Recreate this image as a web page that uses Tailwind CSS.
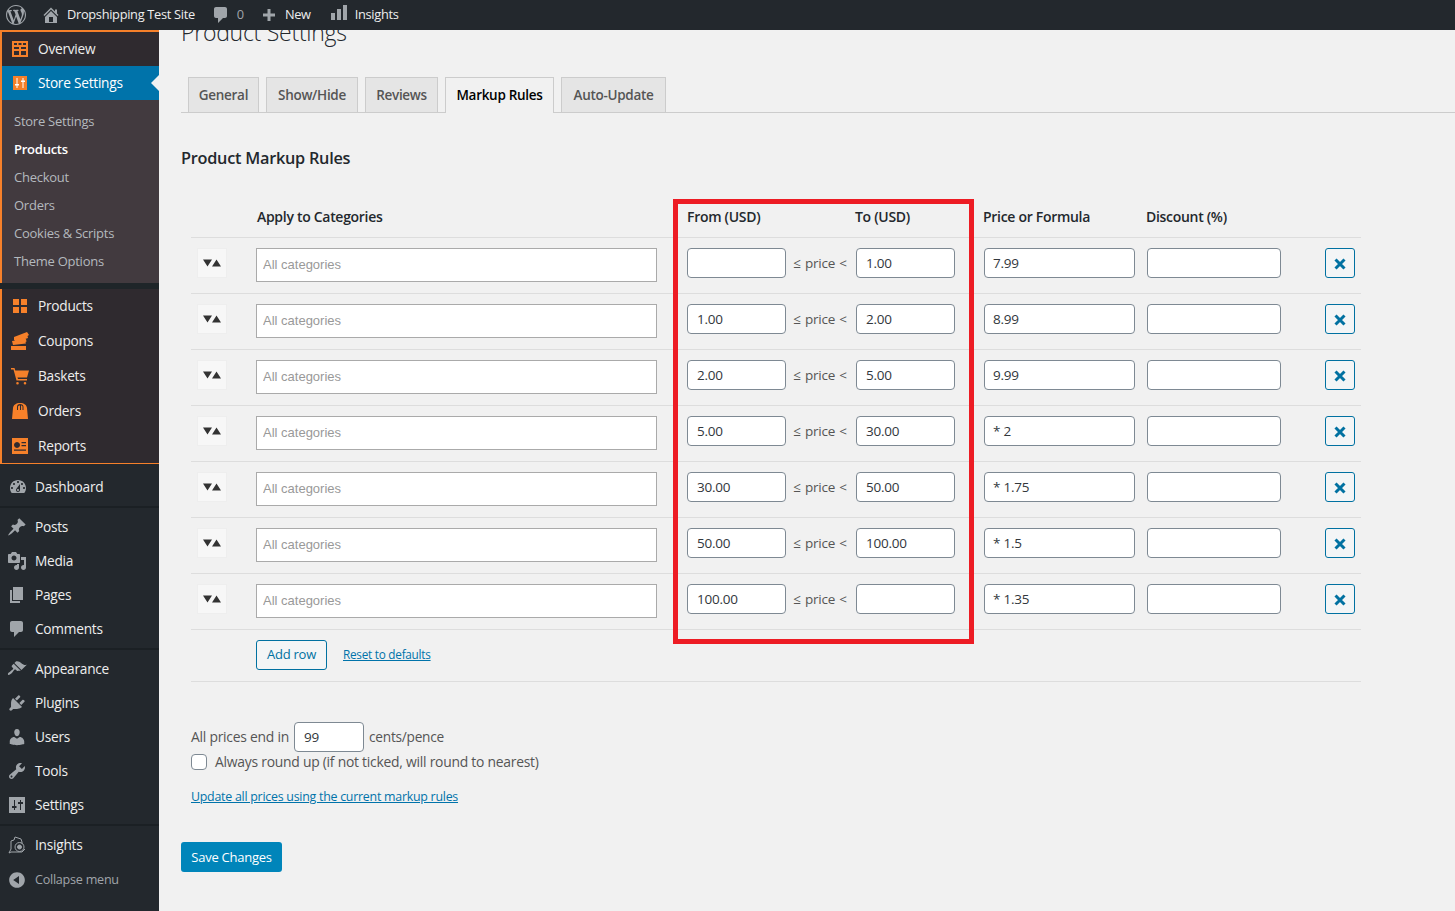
<!DOCTYPE html>
<html lang="en">
<head>
  <meta charset="UTF-8">
  <title>Product Settings</title>
  <script src="https://cdn.jsdelivr.net/npm/@tailwindcss/browser@4"></script>
</head>
<body class="bg-[#f1f1f1] text-[#444] font-['Open_Sans',sans-serif] text-[13px] tracking-[-0.25px]">
  <!-- Admin bar -->
  <header class="relative z-10 flex items-center h-[30px] bg-[#23282d] text-[#eee] text-[12.8px] tracking-[-0.3px]">
    <svg class="w-5 h-5 ml-[6px] fill-[#a0a5aa]" viewBox="0 0 20 20"><path d="M20 10c0-5.51-4.49-10-10-10C4.48 0 0 4.49 0 10c0 5.52 4.48 10 10 10 5.51 0 10-4.48 10-10zM7.78 15.37L4.37 6.22c.55-.02 1.17-.08 1.17-.08.5-.06.44-1.13-.06-1.11 0 0-1.45.11-2.37.11-.18 0-.37 0-.58-.01C4.12 2.69 6.87 1.11 10 1.11c2.33 0 4.45.87 6.05 2.34-.68-.11-1.65.39-1.65 1.58 0 .74.45 1.36.9 2.1.35.61.55 1.36.55 2.46 0 1.49-1.4 5-1.4 5l-3.03-8.37c.54-.02.82-.17.82-.17.5-.05.44-1.25-.06-1.22 0 0-1.44.12-2.38.12-.87 0-2.33-.12-2.33-.12-.5-.03-.56 1.2-.06 1.22l.92.08 1.26 3.41zM17.41 10c.24-.64.74-1.87.43-4.25.7 1.29 1.05 2.71 1.05 4.25 0 3.29-1.73 6.24-4.4 7.78.97-2.59 1.94-5.2 2.92-7.78zM6.1 18.09C3.12 16.65 1.11 13.53 1.11 10c0-1.3.23-2.48.72-3.59C3.25 10.3 4.67 14.2 6.1 18.09zm4.03-6.63l2.58 6.98c-.86.29-1.76.45-2.71.45-.79 0-1.57-.11-2.29-.33.81-2.38 1.62-4.74 2.42-7.1z"/></svg>
    <svg class="w-5 h-5 ml-[15px] fill-[#a0a5aa]" viewBox="0 0 20 20"><path d="M16 8.5l1.53 1.53-1.06 1.06L10 4.62l-6.47 6.47-1.06-1.06L10 2.5l4 4v-2h2v4zm-6-2.46l6 5.99V18H4v-5.97zM12 17v-5H8v5h4z"/></svg>
    <span class="ml-[6px]">Dropshipping Test Site</span>
    <svg class="w-5 h-5 ml-[16px] fill-[#a0a5aa]" viewBox="0 0 20 20"><path d="M5 2h9c1.1 0 2 .9 2 2v7c0 1.1-.9 2-2 2h-2l-5 5v-5H5c-1.1 0-2-.9-2-2V4c0-1.1.9-2 2-2z"/></svg>
    <span class="ml-[6px] text-[#a0a5aa]">0</span>
    <svg class="w-5 h-5 ml-[15px] fill-[#a0a5aa]" viewBox="0 0 20 20"><path d="M16 8.5v3h-4.5V16h-3v-4.500H4v-3h4.500V4h3v4.500z"/></svg>
    <span class="ml-[6px]">New</span>
    <svg class="w-5 h-5 ml-[18px] -mt-[4px] fill-[#a0a5aa]" viewBox="0 0 20 20"><path d="M18 17V2h-4v15h4zm-6 0V6H8v11h4zm-6 0v-7H2v7h4z"/></svg>
    <span class="ml-[6px]">Insights</span>
  </header>

  <div class="flex min-h-[881px]">
    <!-- Sidebar -->
    <aside class="w-[159px] shrink-0 bg-[#23282d] text-[#eee] text-[13.7px]">
      <div class="border-l-2 border-t-2 border-b border-[#f6802a] bg-[#2f2a2f]">
        <a class="flex items-center h-[34px] pl-[9px] gap-[9px]">
          <svg class="w-[18px] h-[18px] fill-[#f6802a]" viewBox="0 0 18 18"><path d="M1 1h16v16H1zM3 3v2h3V3zm4.500 0v2h3V3zM12 3v2h3V3zM3 7v2h5V7zm7 0v2h5V7zM3 11v4h5v-4zm7 0v4h5v-4z" fill-rule="evenodd"/></svg>
          <span>Overview</span>
        </a>
        <a class="relative flex items-center h-[34px] pl-[9px] gap-[9px] bg-[#0073aa] text-white -ml-[2px] border-l-2 border-[#f6802a]">
          <svg class="w-[18px] h-[18px]" viewBox="0 0 18 18"><path class="fill-[#f6802a]" d="M2 2h14v14H2z"/><path class="fill-white" d="M5.500 4h1v6H8v1.500H6.500V14h-1v-2.500H4V10h1.500zM11.500 4h1v2.500H14V8h-1.500v6h-1V8H10V6.500h1.500z"/></svg>
          <span>Store Settings</span>
          <span class="absolute right-0 top-[9px] border-y-[8px] border-r-[8px] border-y-transparent border-r-[#f1f1f1]"></span>
        </a>
        <ul class="bg-[#423a3f] pt-[8px] pb-[7px] text-[13px] text-[#b4b9be]">
          <li class="flex items-center h-[28px] pl-[12px]">Store Settings</li>
          <li class="flex items-center h-[28px] pl-[12px] font-semibold text-white">Products</li>
          <li class="flex items-center h-[28px] pl-[12px]">Checkout</li>
          <li class="flex items-center h-[28px] pl-[12px]">Orders</li>
          <li class="flex items-center h-[28px] pl-[12px]">Cookies &amp; Scripts</li>
          <li class="flex items-center h-[28px] pl-[12px]">Theme Options</li>
        </ul>
        <div class="h-[6px] bg-[#1f2529] -ml-[2px]"></div>
        <a class="flex items-center h-[35px] pb-[1px] pl-[9px] gap-[9px]">
          <svg class="w-[18px] h-[18px] fill-[#f6802a]" viewBox="0 0 18 18"><path d="M2 2h6v6H2zM10 2h6v6h-6zM2 10h6v6H2zM10 10h6v6h-6z"/></svg>
          <span>Products</span>
        </a>
        <a class="flex items-center h-[35px] pb-[1px] pl-[8px] gap-[8px]">
          <svg class="w-[20px] h-[20px] fill-[#f6802a]" viewBox="0 0 20 20"><path d="M4 6l13-5 2 3-1.500 1 .5 2L7 11 4 9zM2 10l14-2 .5 2.500-1 .5.5 1.500L3 14zM1 15h15v4H1z"/></svg>
          <span>Coupons</span>
        </a>
        <a class="flex items-center h-[35px] pb-[1px] pl-[9px] gap-[9px]">
          <svg class="w-[18px] h-[18px] fill-[#f6802a]" viewBox="0 0 18 18"><path d="M0 1h3.500l.8 2.500H18l-2 7H6.500l.5 1.500h9v1.500H5.500L2.500 2.500H0zM6.500 15a1.300 1.300 0 1 1 0 2.600 1.300 1.300 0 0 1 0-2.600zM14 15a1.300 1.300 0 1 1 0 2.600 1.300 1.300 0 0 1 0-2.600z"/></svg>
          <span>Baskets</span>
        </a>
        <a class="flex items-center h-[35px] pb-[1px] pl-[9px] gap-[9px]">
          <svg class="w-[18px] h-[18px] fill-[#f6802a]" viewBox="0 0 18 18" fill-rule="evenodd"><path d="M1 17l1-11c.3-3 3-5 7-5s6.700 2 7 5l1 11zM6 5v3h1V5c0-1 .8-1.500 2-1.500v4.500h1V3.500c1 0 1.500.5 1.500 1.500v3h1V5c0-2-1.500-3-3.500-3S6 3 6 5z"/></svg>
          <span>Orders</span>
        </a>
        <a class="flex items-center h-[34px] pl-[9px] gap-[9px]">
          <svg class="w-[18px] h-[18px] fill-[#f6802a]" viewBox="0 0 18 18" fill-rule="evenodd"><path d="M1 1h16v16H1zM6 5a3 3 0 1 0 .01 0zM10.500 5v1.200H15V5zm0 3v1.200H15V8zM3 12.500v1.200h12v-1.200z"/></svg>
          <span>Reports</span>
        </a>
      </div>

      <div class="pt-[6px]">
        <a class="flex items-center h-[34px] pl-[8px] gap-[7px]">
          <svg class="w-5 h-5 fill-[#a0a5aa]" viewBox="0 0 20 20"><path d="M3.760 16h12.480c1.100-1.370 1.760-3.110 1.760-5 0-4.420-3.580-8-8-8s-8 3.580-8 8c0 1.890.66 3.630 1.760 5zM10 4c.55 0 1 .45 1 1s-.45 1-1 1-1-.45-1-1 .45-1 1-1zM6 6c.55 0 1 .45 1 1s-.45 1-1 1-1-.45-1-1 .45-1 1-1zm8 0c.55 0 1 .45 1 1s-.45 1-1 1-1-.45-1-1 .45-1 1-1zm-5.370 5.550L12 7v6c0 1.100-.9 2-2 2s-2-.9-2-2c0-.57.24-1.080.63-1.450zM4 10c.55 0 1 .45 1 1s-.45 1-1 1-1-.45-1-1 .45-1 1-1zm12 0c.55 0 1 .45 1 1s-.45 1-1 1-1-.45-1-1 .45-1 1-1zm-5 3c0-.55-.45-1-1-1s-1 .45-1 1 .45 1 1 1 1-.45 1-1z" fill-rule="evenodd"/></svg>
          <span>Dashboard</span>
        </a>
      </div>
      <div class="h-[2px] bg-[#1b2024] mt-[2px] mb-[2px]"></div>
      <nav>
        <a class="flex items-center h-[34px] pl-[7px] gap-[8px]">
          <svg class="w-5 h-5 fill-[#a0a5aa]" viewBox="0 0 20 20"><path d="M10.440 3.020l1.820-1.820 6.360 6.350-1.830 1.820c-1.050-.68-2.480-.57-3.410.36l-.75.75c-.92.93-1.040 2.350-.35 3.410l-1.830 1.820-2.410-2.410-2.800 2.790c-.42.42-3.380 2.710-3.800 2.290s1.860-3.390 2.280-3.810l2.790-2.790L4.100 9.360l1.830-1.820c1.050.69 2.480.57 3.400-.36l.75-.75c.93-.92 1.050-2.350.36-3.410z"/></svg>
          <span>Posts</span>
        </a>
        <a class="flex items-center h-[34px] pl-[7px] gap-[8px]">
          <svg class="w-5 h-5 fill-[#a0a5aa]" viewBox="0 0 20 20"><path d="M13 11V4c0-.55-.45-1-1-1h-1.670L9 1H5L3.670 3H2c-.55 0-1 .45-1 1v7c0 .55.45 1 1 1h10c.55 0 1-.45 1-1zM7 4.500c1.380 0 2.500 1.120 2.500 2.500S8.380 9.500 7 9.500 4.500 8.380 4.500 7 5.620 4.500 7 4.500zM14 6h5v10.500c0 1.380-1.120 2.500-2.500 2.500S14 17.880 14 16.500s1.120-2.500 2.500-2.500c.17 0 .34.02.5.05V9h-3V6zm-4 8.050V13h2v3.500c0 1.380-1.120 2.500-2.500 2.500S7 17.880 7 16.500 8.120 14 9.500 14c.17 0 .34.02.5.05z" fill-rule="evenodd"/></svg>
          <span>Media</span>
        </a>
        <a class="flex items-center h-[34px] pl-[7px] gap-[8px]">
          <svg class="w-5 h-5 fill-[#a0a5aa]" viewBox="0 0 20 20"><path d="M6 15V2h10v13H6zm-1 1h8v2H3V5h2v11z"/></svg>
          <span>Pages</span>
        </a>
        <a class="flex items-center h-[34px] pl-[7px] gap-[8px]">
          <svg class="w-5 h-5 fill-[#a0a5aa]" viewBox="0 0 20 20"><path d="M5 2h9c1.100 0 2 .9 2 2v7c0 1.100-.9 2-2 2h-2l-5 5v-5H5c-1.100 0-2-.9-2-2V4c0-1.100.9-2 2-2z"/></svg>
          <span>Comments</span>
        </a>
      </nav>
      <div class="h-[2px] bg-[#1b2024] mt-[2px] mb-[2px]"></div>
      <nav>
        <a class="flex items-center h-[34px] pl-[7px] gap-[8px]">
          <svg class="w-5 h-5 fill-[#a0a5aa]" viewBox="0 0 20 20"><path d="M14.480 11.060L7.410 3.990l1.500-1.500c.5-.56 2.300-.47 3.510.32 1.210.8 1.430 1.280 2.910 2.100 1.180.64 2.450 1.260 4.450.85zm-.71.71L6.700 4.700 4.930 6.470c-.39.39-.39 1.020 0 1.410l1.060 1.060c.39.39.39 1.030 0 1.420-.6.6-1.430 1.110-2.210 1.690-.35.26-.7.53-1.010.84C1.430 13.230.4 14.960 1.100 15.660c.7.7 2.420-.33 3.760-1.670.31-.31.58-.66.85-1.010.57-.78 1.080-1.610 1.690-2.210.39-.39 1.020-.39 1.410 0l1.060 1.060c.39.39 1.020.39 1.410 0z"/></svg>
          <span>Appearance</span>
        </a>
        <a class="flex items-center h-[34px] pl-[7px] gap-[8px]">
          <svg class="w-5 h-5 fill-[#a0a5aa]" viewBox="0 0 20 20"><path d="M13.110 4.360L9.870 7.600 8 5.730l3.240-3.240c.35-.34 1.050-.2 1.560.32.52.51.66 1.210.31 1.550zm-8 1.770l.91-1.120 9.010 9.010-1.190.84c-.71.71-2.630 1.160-3.820 1.160H6.140L4.900 17.260c-.59.59-1.540.59-2.120 0-.59-.58-.59-1.530 0-2.120l1.240-1.240v-3.880c0-1.130.4-3.190 1.090-3.890zm7.260 3.970l3.240-3.240c.34-.35 1.040-.21 1.550.31.52.51.66 1.210.31 1.550l-3.240 3.250z"/></svg>
          <span>Plugins</span>
        </a>
        <a class="flex items-center h-[34px] pl-[7px] gap-[8px]">
          <svg class="w-5 h-5 fill-[#a0a5aa]" viewBox="0 0 20 20"><path d="M10 9.250c-2.270 0-2.730-3.440-2.730-3.440C7 4.020 7.820 2 9.970 2c2.160 0 2.980 2.020 2.710 3.810 0 0-.41 3.440-2.680 3.440zm0 2.570L12.720 10c2.390 0 4.520 2.330 4.520 4.530v2.490s-3.650 1.130-7.240 1.130c-3.650 0-7.240-1.130-7.240-1.130v-2.490c0-2.250 1.940-4.480 4.470-4.480z"/></svg>
          <span>Users</span>
        </a>
        <a class="flex items-center h-[34px] pl-[7px] gap-[8px]">
          <svg class="w-5 h-5 fill-[#a0a5aa]" viewBox="0 0 20 20"><path d="M16.680 9.770c-1.340 1.340-3.300 1.670-4.950.99l-5.410 6.520c-.99.99-2.590.99-3.580 0s-.99-2.590 0-3.570l6.520-5.420c-.68-1.650-.35-3.610.99-4.950 1.280-1.280 3.120-1.620 4.720-1.060l-2.890 2.890 2.820 2.820 2.860-2.870c.53 1.580.18 3.390-1.080 4.650zM3.810 16.210c.4.39 1.040.39 1.430 0 .4-.4.4-1.040 0-1.430-.39-.4-1.030-.4-1.430 0-.39.39-.39 1.030 0 1.430z" fill-rule="evenodd"/></svg>
          <span>Tools</span>
        </a>
        <a class="flex items-center h-[34px] pl-[7px] gap-[8px]">
          <svg class="w-5 h-5 fill-[#a0a5aa]" viewBox="0 0 20 20" fill-rule="evenodd"><path d="M2 2h16v16H2zM8 11h1.500v2H8v2H7v-2H5v-2h2V5h1zm5-2h-2V7h2V5h1v2h2v2h-2v6h-1z"/></svg>
          <span>Settings</span>
        </a>
      </nav>
      <div class="h-[2px] bg-[#1b2024] mt-[2px] mb-[2px]"></div>
      <nav>
        <a class="flex items-center h-[34px] pl-[7px] gap-[8px]">
          <svg class="w-5 h-5 fill-none stroke-[#a0a5aa]" viewBox="0 0 20 20"><path d="M4 17l-2 1 2-4V6l3-1 1-3 3 1 3 1 1 3v2M4 17h11l3-3"/><circle cx="12.500" cy="12" r="4.500"/><circle class="fill-[#a0a5aa]" cx="12.500" cy="12" r="2"/></svg>
          <span>Insights</span>
        </a>
        <a class="flex items-center h-[34px] pt-[2px] pl-[7px] gap-[8px] text-[#a0a5aa] text-[12.6px]">
          <svg class="w-5 h-5 fill-[#a0a5aa]" viewBox="0 0 20 20"><path d="M10 2.160c4.330 0 7.840 3.510 7.840 7.840s-3.510 7.840-7.840 7.840S2.160 14.330 2.160 10 5.710 2.160 10 2.160zm2 11.720V6.120L6.180 9.970z" fill-rule="evenodd"/></svg>
          <span>Collapse menu</span>
        </a>
      </nav>
    </aside>

    <!-- Main content -->
    <main class="flex-1 pl-[22px] text-[13.5px]">
      <h1 class="h-[30px] -mt-[13px] mb-[30px] text-[23px] leading-[30px] font-light text-[#23282d]">Product Settings</h1>

      <nav class="flex h-[36px] pl-[7px] gap-[7px] border-b border-[#ccc] text-[13.5px] tracking-[-0.3px] font-semibold text-[#555]">
        <a class="flex items-center justify-center w-[71px] h-[35px] bg-[#e5e5e5] border border-b-0 border-[#ccc]">General</a>
        <a class="flex items-center justify-center w-[92px] h-[35px] bg-[#e5e5e5] border border-b-0 border-[#ccc]">Show/Hide</a>
        <a class="flex items-center justify-center w-[73px] h-[35px] bg-[#e5e5e5] border border-b-0 border-[#ccc]">Reviews</a>
        <a class="flex items-center justify-center w-[109px] h-[36px] pb-[1px] bg-[#f1f1f1] border border-b-0 border-[#ccc] text-black">Markup Rules</a>
        <a class="flex items-center justify-center w-[105px] h-[35px] bg-[#e5e5e5] border border-b-0 border-[#ccc]">Auto-Update</a>
      </nav>

      <h2 class="mt-[33px] h-[24px] text-[16.300px] leading-[24px] font-semibold text-[#23282d]">Product Markup Rules</h2>

      <!-- Markup rules table -->
      <div class="relative ml-[10px] mt-[29px] w-[1170px]">
        <div class="flex items-center h-[39px] pb-[3px] border-b border-[#ddd] text-[14px] tracking-[-0.3px] font-semibold text-[#23282d]">
          <span class="ml-[66px] w-[430px]">Apply to Categories</span>
          <span class="w-[168px]">From (USD)</span>
          <span class="w-[128px]">To (USD)</span>
          <span class="w-[163px]">Price or Formula</span>
          <span>Discount (%)</span>
        </div>

        <div class="flex h-[56px] pt-[10px] border-b border-[#ddd]">
          <button class="flex items-center justify-center w-[30px] h-[30px] ml-[6px] bg-[#f7f7f7] border border-[#eee]"><svg class="w-[18px] h-[8px] fill-[#333]" viewBox="0 0 18 8"><path d="M0 .5h9L4.500 7.500zM9 7.500h9L13.500 .5z"/></svg></button>
          <input class="w-[401px] h-[34px] ml-[29px] px-[6px] pb-[2px] bg-white border border-[#aaa] text-[13px] tracking-normal font-['Liberation_Sans',sans-serif] placeholder:text-[#999]" placeholder="All categories">
          <input class="w-[99px] h-[30px] ml-[30px] px-[9px] pb-[1px] bg-white border border-[#7e8993] rounded-[4px] text-[#32373c]" value="">
          <span class="flex items-center justify-center w-[68px] mr-[2px] h-[30px] text-[#555] [word-spacing:1px]">≤ price &lt;</span>
          <input class="w-[99px] h-[30px] px-[9px] pb-[1px] bg-white border border-[#7e8993] rounded-[4px] text-[#32373c]" value="1.00">
          <input class="w-[151px] h-[30px] ml-[29px] px-[8px] pb-[1px] bg-white border border-[#7e8993] rounded-[4px] text-[#32373c]" value="7.99">
          <input class="w-[134px] h-[30px] ml-[12px] px-[8px] pb-[1px] bg-white border border-[#7e8993] rounded-[4px] text-[#32373c]" value="">
          <button class="flex items-center justify-center w-[30px] h-[30px] ml-[44px] pt-[1px] bg-[#f3f5f6] border border-[#0071a1] rounded-[3px]"><svg class="w-[12px] h-[12px] stroke-[#0071a1] stroke-[3px]" viewBox="0 0 12 12"><path d="M1.500 1.500l9 9M10.500 1.500l-9 9"/></svg></button>
        </div>

        <div class="flex h-[56px] pt-[10px] border-b border-[#ddd]">
          <button class="flex items-center justify-center w-[30px] h-[30px] ml-[6px] bg-[#f7f7f7] border border-[#eee]"><svg class="w-[18px] h-[8px] fill-[#333]" viewBox="0 0 18 8"><path d="M0 .5h9L4.500 7.500zM9 7.500h9L13.500 .5z"/></svg></button>
          <input class="w-[401px] h-[34px] ml-[29px] px-[6px] pb-[2px] bg-white border border-[#aaa] text-[13px] tracking-normal font-['Liberation_Sans',sans-serif] placeholder:text-[#999]" placeholder="All categories">
          <input class="w-[99px] h-[30px] ml-[30px] px-[9px] pb-[1px] bg-white border border-[#7e8993] rounded-[4px] text-[#32373c]" value="1.00">
          <span class="flex items-center justify-center w-[68px] mr-[2px] h-[30px] text-[#555] [word-spacing:1px]">≤ price &lt;</span>
          <input class="w-[99px] h-[30px] px-[9px] pb-[1px] bg-white border border-[#7e8993] rounded-[4px] text-[#32373c]" value="2.00">
          <input class="w-[151px] h-[30px] ml-[29px] px-[8px] pb-[1px] bg-white border border-[#7e8993] rounded-[4px] text-[#32373c]" value="8.99">
          <input class="w-[134px] h-[30px] ml-[12px] px-[8px] pb-[1px] bg-white border border-[#7e8993] rounded-[4px] text-[#32373c]" value="">
          <button class="flex items-center justify-center w-[30px] h-[30px] ml-[44px] pt-[1px] bg-[#f3f5f6] border border-[#0071a1] rounded-[3px]"><svg class="w-[12px] h-[12px] stroke-[#0071a1] stroke-[3px]" viewBox="0 0 12 12"><path d="M1.500 1.500l9 9M10.500 1.500l-9 9"/></svg></button>
        </div>

        <div class="flex h-[56px] pt-[10px] border-b border-[#ddd]">
          <button class="flex items-center justify-center w-[30px] h-[30px] ml-[6px] bg-[#f7f7f7] border border-[#eee]"><svg class="w-[18px] h-[8px] fill-[#333]" viewBox="0 0 18 8"><path d="M0 .5h9L4.500 7.500zM9 7.500h9L13.500 .5z"/></svg></button>
          <input class="w-[401px] h-[34px] ml-[29px] px-[6px] pb-[2px] bg-white border border-[#aaa] text-[13px] tracking-normal font-['Liberation_Sans',sans-serif] placeholder:text-[#999]" placeholder="All categories">
          <input class="w-[99px] h-[30px] ml-[30px] px-[9px] pb-[1px] bg-white border border-[#7e8993] rounded-[4px] text-[#32373c]" value="2.00">
          <span class="flex items-center justify-center w-[68px] mr-[2px] h-[30px] text-[#555] [word-spacing:1px]">≤ price &lt;</span>
          <input class="w-[99px] h-[30px] px-[9px] pb-[1px] bg-white border border-[#7e8993] rounded-[4px] text-[#32373c]" value="5.00">
          <input class="w-[151px] h-[30px] ml-[29px] px-[8px] pb-[1px] bg-white border border-[#7e8993] rounded-[4px] text-[#32373c]" value="9.99">
          <input class="w-[134px] h-[30px] ml-[12px] px-[8px] pb-[1px] bg-white border border-[#7e8993] rounded-[4px] text-[#32373c]" value="">
          <button class="flex items-center justify-center w-[30px] h-[30px] ml-[44px] pt-[1px] bg-[#f3f5f6] border border-[#0071a1] rounded-[3px]"><svg class="w-[12px] h-[12px] stroke-[#0071a1] stroke-[3px]" viewBox="0 0 12 12"><path d="M1.500 1.500l9 9M10.500 1.500l-9 9"/></svg></button>
        </div>

        <div class="flex h-[56px] pt-[10px] border-b border-[#ddd]">
          <button class="flex items-center justify-center w-[30px] h-[30px] ml-[6px] bg-[#f7f7f7] border border-[#eee]"><svg class="w-[18px] h-[8px] fill-[#333]" viewBox="0 0 18 8"><path d="M0 .5h9L4.500 7.500zM9 7.500h9L13.500 .5z"/></svg></button>
          <input class="w-[401px] h-[34px] ml-[29px] px-[6px] pb-[2px] bg-white border border-[#aaa] text-[13px] tracking-normal font-['Liberation_Sans',sans-serif] placeholder:text-[#999]" placeholder="All categories">
          <input class="w-[99px] h-[30px] ml-[30px] px-[9px] pb-[1px] bg-white border border-[#7e8993] rounded-[4px] text-[#32373c]" value="5.00">
          <span class="flex items-center justify-center w-[68px] mr-[2px] h-[30px] text-[#555] [word-spacing:1px]">≤ price &lt;</span>
          <input class="w-[99px] h-[30px] px-[9px] pb-[1px] bg-white border border-[#7e8993] rounded-[4px] text-[#32373c]" value="30.00">
          <input class="w-[151px] h-[30px] ml-[29px] px-[8px] pb-[1px] bg-white border border-[#7e8993] rounded-[4px] text-[#32373c]" value="* 2">
          <input class="w-[134px] h-[30px] ml-[12px] px-[8px] pb-[1px] bg-white border border-[#7e8993] rounded-[4px] text-[#32373c]" value="">
          <button class="flex items-center justify-center w-[30px] h-[30px] ml-[44px] pt-[1px] bg-[#f3f5f6] border border-[#0071a1] rounded-[3px]"><svg class="w-[12px] h-[12px] stroke-[#0071a1] stroke-[3px]" viewBox="0 0 12 12"><path d="M1.500 1.500l9 9M10.500 1.500l-9 9"/></svg></button>
        </div>

        <div class="flex h-[56px] pt-[10px] border-b border-[#ddd]">
          <button class="flex items-center justify-center w-[30px] h-[30px] ml-[6px] bg-[#f7f7f7] border border-[#eee]"><svg class="w-[18px] h-[8px] fill-[#333]" viewBox="0 0 18 8"><path d="M0 .5h9L4.500 7.500zM9 7.500h9L13.500 .5z"/></svg></button>
          <input class="w-[401px] h-[34px] ml-[29px] px-[6px] pb-[2px] bg-white border border-[#aaa] text-[13px] tracking-normal font-['Liberation_Sans',sans-serif] placeholder:text-[#999]" placeholder="All categories">
          <input class="w-[99px] h-[30px] ml-[30px] px-[9px] pb-[1px] bg-white border border-[#7e8993] rounded-[4px] text-[#32373c]" value="30.00">
          <span class="flex items-center justify-center w-[68px] mr-[2px] h-[30px] text-[#555] [word-spacing:1px]">≤ price &lt;</span>
          <input class="w-[99px] h-[30px] px-[9px] pb-[1px] bg-white border border-[#7e8993] rounded-[4px] text-[#32373c]" value="50.00">
          <input class="w-[151px] h-[30px] ml-[29px] px-[8px] pb-[1px] bg-white border border-[#7e8993] rounded-[4px] text-[#32373c]" value="* 1.75">
          <input class="w-[134px] h-[30px] ml-[12px] px-[8px] pb-[1px] bg-white border border-[#7e8993] rounded-[4px] text-[#32373c]" value="">
          <button class="flex items-center justify-center w-[30px] h-[30px] ml-[44px] pt-[1px] bg-[#f3f5f6] border border-[#0071a1] rounded-[3px]"><svg class="w-[12px] h-[12px] stroke-[#0071a1] stroke-[3px]" viewBox="0 0 12 12"><path d="M1.500 1.500l9 9M10.500 1.500l-9 9"/></svg></button>
        </div>

        <div class="flex h-[56px] pt-[10px] border-b border-[#ddd]">
          <button class="flex items-center justify-center w-[30px] h-[30px] ml-[6px] bg-[#f7f7f7] border border-[#eee]"><svg class="w-[18px] h-[8px] fill-[#333]" viewBox="0 0 18 8"><path d="M0 .5h9L4.500 7.500zM9 7.500h9L13.500 .5z"/></svg></button>
          <input class="w-[401px] h-[34px] ml-[29px] px-[6px] pb-[2px] bg-white border border-[#aaa] text-[13px] tracking-normal font-['Liberation_Sans',sans-serif] placeholder:text-[#999]" placeholder="All categories">
          <input class="w-[99px] h-[30px] ml-[30px] px-[9px] pb-[1px] bg-white border border-[#7e8993] rounded-[4px] text-[#32373c]" value="50.00">
          <span class="flex items-center justify-center w-[68px] mr-[2px] h-[30px] text-[#555] [word-spacing:1px]">≤ price &lt;</span>
          <input class="w-[99px] h-[30px] px-[9px] pb-[1px] bg-white border border-[#7e8993] rounded-[4px] text-[#32373c]" value="100.00">
          <input class="w-[151px] h-[30px] ml-[29px] px-[8px] pb-[1px] bg-white border border-[#7e8993] rounded-[4px] text-[#32373c]" value="* 1.5">
          <input class="w-[134px] h-[30px] ml-[12px] px-[8px] pb-[1px] bg-white border border-[#7e8993] rounded-[4px] text-[#32373c]" value="">
          <button class="flex items-center justify-center w-[30px] h-[30px] ml-[44px] pt-[1px] bg-[#f3f5f6] border border-[#0071a1] rounded-[3px]"><svg class="w-[12px] h-[12px] stroke-[#0071a1] stroke-[3px]" viewBox="0 0 12 12"><path d="M1.500 1.500l9 9M10.500 1.500l-9 9"/></svg></button>
        </div>

        <div class="flex h-[56px] pt-[10px] border-b border-[#ddd]">
          <button class="flex items-center justify-center w-[30px] h-[30px] ml-[6px] bg-[#f7f7f7] border border-[#eee]"><svg class="w-[18px] h-[8px] fill-[#333]" viewBox="0 0 18 8"><path d="M0 .5h9L4.500 7.500zM9 7.500h9L13.500 .5z"/></svg></button>
          <input class="w-[401px] h-[34px] ml-[29px] px-[6px] pb-[2px] bg-white border border-[#aaa] text-[13px] tracking-normal font-['Liberation_Sans',sans-serif] placeholder:text-[#999]" placeholder="All categories">
          <input class="w-[99px] h-[30px] ml-[30px] px-[9px] pb-[1px] bg-white border border-[#7e8993] rounded-[4px] text-[#32373c]" value="100.00">
          <span class="flex items-center justify-center w-[68px] mr-[2px] h-[30px] text-[#555] [word-spacing:1px]">≤ price &lt;</span>
          <input class="w-[99px] h-[30px] px-[9px] pb-[1px] bg-white border border-[#7e8993] rounded-[4px] text-[#32373c]" value="">
          <input class="w-[151px] h-[30px] ml-[29px] px-[8px] pb-[1px] bg-white border border-[#7e8993] rounded-[4px] text-[#32373c]" value="* 1.35">
          <input class="w-[134px] h-[30px] ml-[12px] px-[8px] pb-[1px] bg-white border border-[#7e8993] rounded-[4px] text-[#32373c]" value="">
          <button class="flex items-center justify-center w-[30px] h-[30px] ml-[44px] pt-[1px] bg-[#f3f5f6] border border-[#0071a1] rounded-[3px]"><svg class="w-[12px] h-[12px] stroke-[#0071a1] stroke-[3px]" viewBox="0 0 12 12"><path d="M1.500 1.500l9 9M10.500 1.500l-9 9"/></svg></button>
        </div>

        <div class="flex items-start h-[52px] pt-[10px] pl-[65px] gap-[16px] border-b border-[#ddd]">
          <button class="w-[71px] h-[30px] bg-[#f3f5f6] border border-[#0071a1] rounded-[3px] text-[13px] text-[#0071a1]">Add row</button>
          <a class="mt-[6px] text-[11.750px] text-[#0073aa] underline">Reset to defaults</a>
        </div>

        <!-- Annotation box drawn over the screenshot -->
        <div class="absolute left-[482px] top-0 w-[301px] h-[445px] border-[5px] border-[#ed1c24] pointer-events-none"></div>
      </div>

      <div class="ml-[10px] mt-[40px] flex items-center h-[30px] text-[13.9px] text-[#555]">
        <span class="w-[99px] whitespace-nowrap">All prices end in</span>
        <input class="w-[70px] h-[30px] ml-[4px] px-[9px] pb-[1px] bg-white border border-[#7e8993] rounded-[4px] text-[13.5px] text-[#32373c]" value="99">
        <span class="ml-[5px] text-[13.7px]">cents/pence</span>
      </div>
      <label class="ml-[10px] flex items-center h-[20px] gap-[8px] text-[13.900px] text-[#555]">
        <span class="w-[16px] h-[16px] bg-white border border-[#7e8993] rounded-[4px]"></span>
        <span>Always round up (if not ticked, will round to nearest)</span>
      </label>
      <a class="block ml-[10px] mt-[15px] h-[20px] leading-[20px] text-[12.400px] text-[#0073aa] underline">Update all prices using the current markup rules</a>

      <button class="mt-[35px] w-[101px] h-[30px] pt-[1px] bg-[#0085ba] rounded-[3px] text-[13px] text-white">Save Changes</button>
    </main>
  </div>
</body>
</html>
